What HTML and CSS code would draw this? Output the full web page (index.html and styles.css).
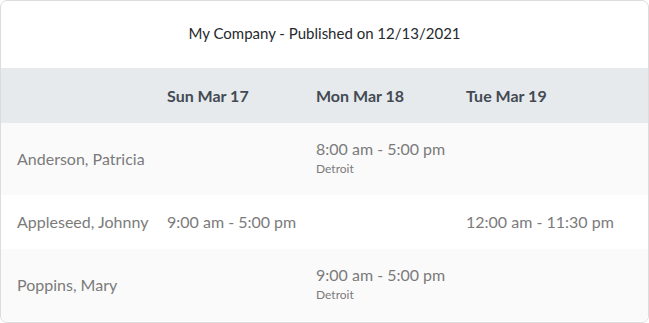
FILE: index.html
```html
<!DOCTYPE html>
<html>
<head>
<meta charset="utf-8">
<link rel="stylesheet" href="styles.css">
</head>
<body>
<div class="card">
  <div class="title">My Company - Published on 12/13/2021</div>
  <div class="row head">
    <div class="cell"></div>
    <div class="cell">Sun Mar 17</div>
    <div class="cell">Mon Mar 18</div>
    <div class="cell">Tue Mar 19</div>
  </div>
  <div class="row shade">
    <div class="cell">Anderson, Patricia</div>
    <div class="cell"></div>
    <div class="cell"><div class="time">8:00 am - 5:00 pm</div><div class="loc">Detroit</div></div>
    <div class="cell"></div>
  </div>
  <div class="row">
    <div class="cell">Appleseed, Johnny</div>
    <div class="cell"><div class="time">9:00 am - 5:00 pm</div></div>
    <div class="cell"></div>
    <div class="cell"><div class="time">12:00 am - 11:30 pm</div></div>
  </div>
  <div class="row shade last">
    <div class="cell">Poppins, Mary</div>
    <div class="cell"></div>
    <div class="cell"><div class="time">9:00 am - 5:00 pm</div><div class="loc">Detroit</div></div>
    <div class="cell"></div>
  </div>
</div>
</body>
</html>
```

FILE: styles.css
```css
* { box-sizing: border-box; }
html, body { margin: 0; padding: 0; background: #ffffff; }
body {
  font-family: Lato, "Liberation Sans", sans-serif;
  width: 649px;
  height: 323px;
}
.card {
  width: 649px;
  height: 323px;
  border: 1px solid #dcdcdc;
  border-radius: 7px;
  overflow: hidden;
  background: #fff;
}
.title {
  height: 67px;
  padding-bottom: 3px;
  display: flex;
  align-items: center;
  justify-content: center;
  font-size: 15px;
  color: #26292d;
}
.row {
  display: grid;
  grid-template-columns: 150px 149px 150px 1fr;
  align-items: center;
  min-height: 54px;
  color: #7b7b7b;
  font-size: 16px;
}
.row.shade { background: #fafafa; min-height: 72px; }
.row.last { min-height: 72px; }
.row.head {
  background: #e6eaed;
  min-height: 55px;
  color: #434a53;
  font-weight: 700;
}
.cell {
  padding: 0 0 0 16px;
  line-height: 22px;
  white-space: nowrap;
}
.time { line-height: 20px; }
.loc { font-size: 12px; line-height: 20px; }
```
